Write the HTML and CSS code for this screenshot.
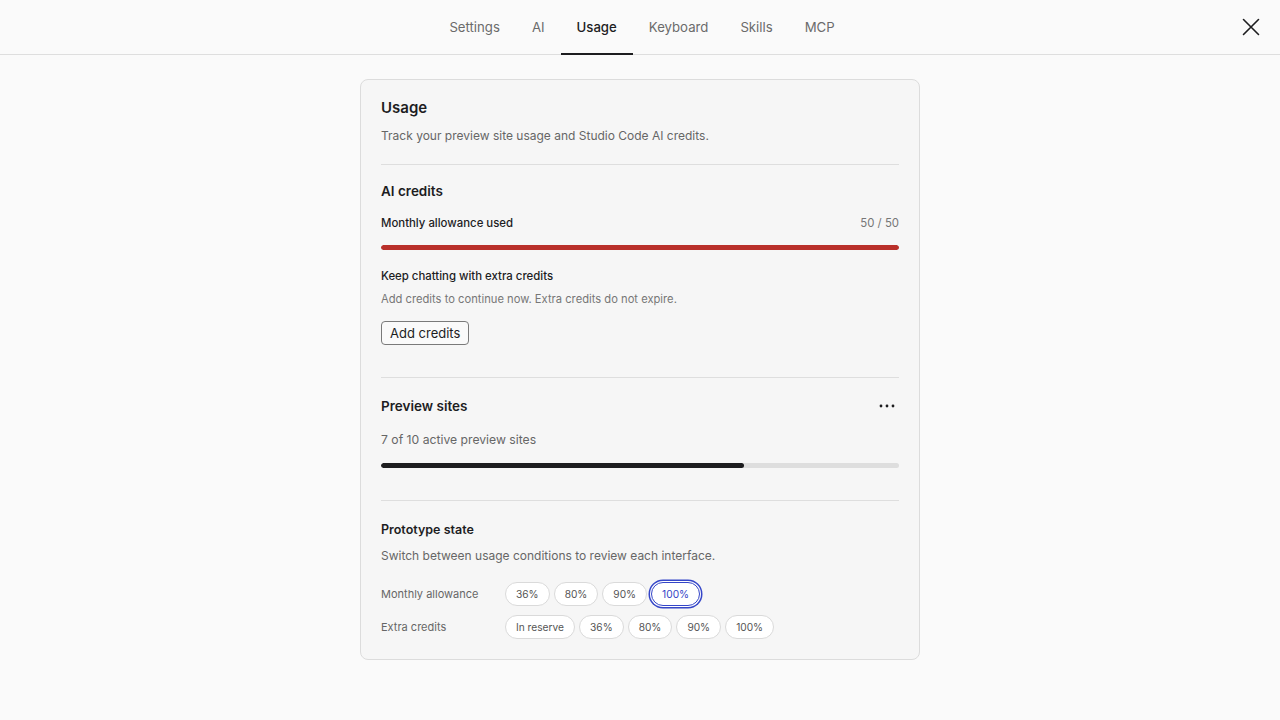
FILE: index.html
```html
<!DOCTYPE html>
<html lang="en">
<head>
    <meta charset="UTF-8">
    <meta name="viewport" content="width=device-width, initial-scale=1.0">
    <title>Usage</title>
    <link rel="stylesheet" href="styles.css">
</head>
<body>
    <header class="topbar">
        <nav class="tabs">
            <a class="tab">Settings</a>
            <a class="tab">AI</a>
            <a class="tab active">Usage</a>
            <a class="tab">Keyboard</a>
            <a class="tab">Skills</a>
            <a class="tab">MCP</a>
        </nav>
        <button class="close-btn" aria-label="Close">
            <svg width="18" height="18" viewBox="0 0 18 18">
                <path d="M1.5 1.5 L16.5 16.5 M16.5 1.5 L1.5 16.5" stroke="#1d1d1f" stroke-width="1.6" stroke-linecap="round"/>
            </svg>
        </button>
    </header>

    <main class="content">
        <section class="card">
            <h1 class="card-title">Usage</h1>
            <p class="card-sub">Track your preview site usage and Studio Code AI credits.</p>

            <div class="block credits">
                <h2 class="block-title">AI credits</h2>
                <div class="meter-head">
                    <span class="meter-label">Monthly allowance used</span>
                    <span class="meter-count">50 / 50</span>
                </div>
                <div class="bar"><div class="bar-fill red" style="width: 100%"></div></div>

                <h3 class="extra-title">Keep chatting with extra credits</h3>
                <p class="extra-text">Add credits to continue now. Extra credits do not expire.</p>
                <button class="btn">Add credits</button>
            </div>

            <div class="block sites">
                <div class="block-head">
                    <h2 class="block-title">Preview sites</h2>
                    <button class="more-btn" aria-label="More">
                        <svg width="16" height="4" viewBox="0 0 16 4">
                            <circle cx="2" cy="2" r="1.4" fill="#1d1d1f"/>
                            <circle cx="8" cy="2" r="1.4" fill="#1d1d1f"/>
                            <circle cx="14" cy="2" r="1.4" fill="#1d1d1f"/>
                        </svg>
                    </button>
                </div>
                <p class="sites-text">7 of 10 active preview sites</p>
                <div class="bar"><div class="bar-fill dark" style="width: 70%"></div></div>
            </div>

            <div class="block proto">
                <h2 class="proto-title">Prototype state</h2>
                <p class="proto-text">Switch between usage conditions to review each interface.</p>
                <div class="state-row">
                    <span class="state-label">Monthly allowance</span>
                    <div class="pills">
                        <button class="pill">36%</button>
                        <button class="pill">80%</button>
                        <button class="pill">90%</button>
                        <button class="pill selected">100%</button>
                    </div>
                </div>
                <div class="state-row">
                    <span class="state-label">Extra credits</span>
                    <div class="pills">
                        <button class="pill">In reserve</button>
                        <button class="pill">36%</button>
                        <button class="pill">80%</button>
                        <button class="pill">90%</button>
                        <button class="pill">100%</button>
                    </div>
                </div>
            </div>
        </section>
    </main>
</body>
</html>
```

FILE: styles.css
```css
* {
    box-sizing: border-box;
}

body {
    margin: 0;
    background: #fafafa;
    color: #1d1d1f;
    font-family: Inter, "Liberation Sans", sans-serif;
}

h1, h2, h3, p {
    margin: 0;
}

button {
    font-family: inherit;
    cursor: pointer;
}

/* top tab bar */
.topbar {
    position: relative;
    height: 55px;
    border-bottom: 1px solid #dedede;
    display: flex;
    justify-content: center;
}

.tabs {
    display: flex;
    height: 54px;
    margin-left: 4px;
}

.tab {
    display: flex;
    align-items: center;
    padding: 0 16px;
    font-size: 13.2px;
    color: #6b6b6b;
    border-bottom: 2px solid transparent;
    margin-bottom: -1px;
}

.tab.active {
    color: #1d1d1f;
    font-weight: 500;
    border-bottom-color: #1d1d1f;
}

.close-btn {
    position: absolute;
    right: 20px;
    top: 18px;
    padding: 0;
    border: 0;
    background: none;
    display: flex;
}

/* card */
.content {
    display: flex;
    justify-content: center;
    padding-top: 24px;
}

.card {
    width: 560px;
    background: #f6f6f6;
    border: 1px solid #dcdcdc;
    border-radius: 8px;
    padding: 20px;
}

.card-title {
    font-size: 15px;
    font-weight: 600;
    line-height: 16px;
}

.card-sub {
    margin-top: 12px;
    font-size: 12px;
    line-height: 16px;
    color: #666;
}

.block {
    border-top: 1px solid #dedede;
}

.credits {
    margin-top: 20px;
}

.block-title {
    font-size: 13.5px;
    font-weight: 600;
    line-height: 18px;
}

.credits .block-title {
    margin-top: 17px;
}

.meter-head {
    margin-top: 15px;
    display: flex;
    justify-content: space-between;
    font-size: 11.4px;
    line-height: 16px;
}

.meter-label {
    font-weight: 500;
}

.meter-count {
    color: #777;
}

.bar {
    height: 5px;
    border-radius: 3px;
    background: #dedede;
    overflow: hidden;
}

.bar-fill {
    height: 100%;
    border-radius: 3px;
}

.bar-fill.red {
    background: #b9302a;
}

.bar-fill.dark {
    background: #1d1d1f;
}

.credits .bar {
    margin-top: 14px;
}

.extra-title {
    margin-top: 18px;
    font-size: 11.4px;
    font-weight: 500;
    line-height: 16px;
}

.extra-text {
    margin-top: 7px;
    font-size: 11.2px;
    line-height: 16px;
    color: #777;
}

.btn {
    margin-top: 14px;
    height: 24px;
    padding: 0 8px;
    font-size: 13px;
    color: #1d1d1f;
    background: #fafafa;
    border: 1px solid #7a7a7a;
    border-radius: 4px;
}

.sites {
    margin-top: 32px;
}

.block-head {
    margin-top: 19px;
    display: flex;
    justify-content: space-between;
    align-items: center;
}

.more-btn {
    border: 0;
    background: none;
    padding: 0 4px 0 0;
    display: flex;
}

.sites-text {
    margin-top: 17px;
    font-size: 12.2px;
    line-height: 16px;
    color: #666;
}

.sites .bar {
    margin-top: 15px;
}

.proto {
    margin-top: 32px;
}

.proto-title {
    margin-top: 21px;
    font-size: 12.5px;
    font-weight: 600;
    line-height: 16px;
}

.proto-text {
    margin-top: 10px;
    font-size: 12px;
    line-height: 16px;
    color: #666;
}

.state-row {
    display: flex;
    align-items: center;
    margin-top: 9px;
}

.proto-text + .state-row {
    margin-top: 18px;
}

.state-label {
    width: 124px;
    font-size: 11px;
    color: #666;
}

.pills {
    display: flex;
    gap: 4px;
}

.pill {
    height: 24px;
    padding: 0 10px;
    font-size: 10.2px;
    color: #555;
    background: #fff;
    border: 1px solid #dadada;
    border-radius: 12px;
}

.pill.selected {
    color: #3546c8;
    border-color: #3546c8;
    box-shadow: 0 0 0 1px #fff, 0 0 0 2.5px #3546c8;
}
```
